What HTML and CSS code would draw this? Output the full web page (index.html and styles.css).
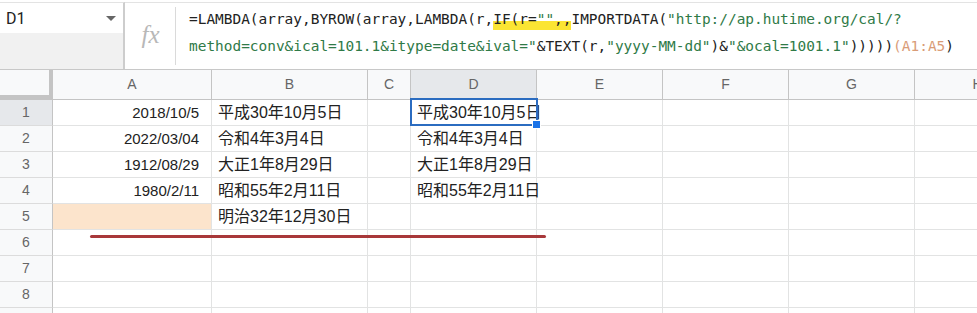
FILE: index.html
```html
<!DOCTYPE html>
<html lang="ja">
<head>
    <meta charset="UTF-8">
    <meta name="viewport" content="width=device-width, initial-scale=1.0">
    <title>LAMBDA / IMPORTDATA 和暦変換</title>
    <link rel="stylesheet" href="styles.css">
</head>
<body>
    <div class="formula-bar">
        <div class="name-box">
            <div class="name-field">
                <span class="cell-ref">D1</span>
                <span class="caret"></span>
            </div>
        </div>
        <div class="fx-cell">
            <span class="fx">fx</span>
        </div>
        <div class="formula">
            <div class="formula-line">=LAMBDA(array,BYROW(array,LAMBDA(r,<span class="hl">IF(r=<span class="str">""</span>,,</span>IMPORTDATA(<span class="str">"http://ap.hutime.org/cal/?</span></div>
            <div class="formula-line"><span class="str">method=conv&amp;ical=101.1&amp;itype=date&amp;ival="</span>&amp;TEXT(r,<span class="str">"yyyy-MM-dd"</span>)&amp;<span class="str">"&amp;ocal=1001.1"</span>)))))<span class="ref">(A1:A5</span>)</div>
        </div>
    </div>

    <div class="sheet">
        <div class="row head-row">
            <div class="corner"></div>
            <div class="col-head">A</div>
            <div class="col-head">B</div>
            <div class="col-head">C</div>
            <div class="col-head active">D</div>
            <div class="col-head">E</div>
            <div class="col-head">F</div>
            <div class="col-head">G</div>
            <div class="col-head">H</div>
        </div>

        <div class="row">
            <div class="row-head active">1</div>
            <div class="cell num">2018/10/5</div>
            <div class="cell jp">平成30年10月5日</div>
            <div class="cell"></div>
            <div class="cell jp selected">平成30年10月5日<span class="selection"><span class="handle"></span></span></div>
            <div class="cell"></div>
            <div class="cell"></div>
            <div class="cell"></div>
            <div class="cell"></div>
        </div>
        <div class="row">
            <div class="row-head">2</div>
            <div class="cell num">2022/03/04</div>
            <div class="cell jp">令和4年3月4日</div>
            <div class="cell"></div>
            <div class="cell jp">令和4年3月4日</div>
            <div class="cell"></div>
            <div class="cell"></div>
            <div class="cell"></div>
            <div class="cell"></div>
        </div>
        <div class="row">
            <div class="row-head">3</div>
            <div class="cell num">1912/08/29</div>
            <div class="cell jp">大正1年8月29日</div>
            <div class="cell"></div>
            <div class="cell jp">大正1年8月29日</div>
            <div class="cell"></div>
            <div class="cell"></div>
            <div class="cell"></div>
            <div class="cell"></div>
        </div>
        <div class="row">
            <div class="row-head">4</div>
            <div class="cell num">1980/2/11</div>
            <div class="cell jp">昭和55年2月11日</div>
            <div class="cell"></div>
            <div class="cell jp">昭和55年2月11日</div>
            <div class="cell"></div>
            <div class="cell"></div>
            <div class="cell"></div>
            <div class="cell"></div>
        </div>
        <div class="row">
            <div class="row-head">5</div>
            <div class="cell num empty-input"></div>
            <div class="cell jp">明治32年12月30日</div>
            <div class="cell"></div>
            <div class="cell"></div>
            <div class="cell"></div>
            <div class="cell"></div>
            <div class="cell"></div>
            <div class="cell"></div>
        </div>
        <div class="row">
            <div class="row-head">6</div>
            <div class="cell"></div>
            <div class="cell"></div>
            <div class="cell"></div>
            <div class="cell"></div>
            <div class="cell"></div>
            <div class="cell"></div>
            <div class="cell"></div>
            <div class="cell"></div>
        </div>
        <div class="row">
            <div class="row-head">7</div>
            <div class="cell"></div>
            <div class="cell"></div>
            <div class="cell"></div>
            <div class="cell"></div>
            <div class="cell"></div>
            <div class="cell"></div>
            <div class="cell"></div>
            <div class="cell"></div>
        </div>
        <div class="row">
            <div class="row-head">8</div>
            <div class="cell"></div>
            <div class="cell"></div>
            <div class="cell"></div>
            <div class="cell"></div>
            <div class="cell"></div>
            <div class="cell"></div>
            <div class="cell"></div>
            <div class="cell"></div>
        </div>
        <div class="row last-row">
            <div class="row-head"></div>
            <div class="cell"></div>
            <div class="cell"></div>
            <div class="cell"></div>
            <div class="cell"></div>
            <div class="cell"></div>
            <div class="cell"></div>
            <div class="cell"></div>
            <div class="cell"></div>
        </div>
    </div>

    <!-- hand-drawn underline annotation -->
    <div class="red-mark"></div>
</body>
</html>
```

FILE: styles.css
```css
body {
    margin: 0;
    width: 977px;
    height: 313px;
    overflow: hidden;
    position: relative;
    background-color: #fff;
    font-family: 'Liberation Sans', Arial, 'Noto Sans CJK JP', sans-serif;
    color: #222;
}

/* formula bar */

.formula-bar {
    display: flex;
    height: 70px;
    box-sizing: border-box;
    padding-top: 2px;
    border-bottom: 1px solid #c8c8c8;
}

.name-box {
    width: 123px;
    flex-shrink: 0;
    background-color: #f1f1f1;
    border-top: 1px solid #e3e3e3;
    border-right: 2px solid #cdcdcd;
}

.name-field {
    display: flex;
    align-items: center;
    justify-content: space-between;
    height: 30px;
    padding: 0 7px 0 6px;
    background-color: #fff;
}

.cell-ref {
    font-family: Roboto, 'Liberation Sans', sans-serif;
    font-size: 16px;
    color: #222;
}

.caret {
    width: 0;
    height: 0;
    border-left: 5px solid transparent;
    border-right: 5px solid transparent;
    border-top: 5px solid #666;
}

.fx-cell {
    width: 51px;
    flex-shrink: 0;
    display: flex;
    align-items: center;
    justify-content: center;
    border-top: 1px solid #e3e3e3;
    position: relative;
}

.fx-cell::after {
    content: "";
    position: absolute;
    right: 0;
    top: 4px;
    bottom: 4px;
    border-right: 1px solid #dadada;
}

.fx {
    font-family: 'Liberation Serif', serif;
    font-style: italic;
    font-size: 25px;
    color: #b8b8b8;
    margin-top: -2px;
}

.formula {
    flex: 1;
    border-top: 1px solid #e3e3e3;
    padding: 3px 0 0 13px;
    font-family: 'DejaVu Sans Mono', 'Liberation Mono', monospace;
    font-size: 14.45px;
    line-height: 27px;
    color: #222;
    overflow: hidden;
}

.formula-line {
    white-space: pre;
}

.formula .str {
    color: #2f7a47;
}

.formula .ref {
    color: #d99c78;
}

.formula .hl {
    padding-bottom: 3px;
    background: linear-gradient(to bottom, transparent 54%, #fbe533 54%);
}

/* grid */

.sheet {
    width: 977px;
    height: 243px;
    overflow: hidden;
}

.row {
    display: grid;
    grid-template-columns: 53px 159px 156px 43px 126px 126px 126px 126px 126px;
    height: 26px;
    box-sizing: border-box;
}

.head-row {
    height: 30px;
}

.corner {
    background-color: #f8f9fa;
    border-right: 4px solid #c4c4c4;
    border-bottom: 5px solid #c4c4c4;
}

.col-head {
    background-color: #f8f9fa;
    border-right: 1px solid #c4c4c4;
    border-bottom: 1px solid #c4c4c4;
    text-align: center;
    font-size: 14px;
    line-height: 29px;
    color: #666;
}

.col-head.active,
.row-head.active {
    background-color: #e6e8eb;
}

.row-head {
    background-color: #f8f9fa;
    border-right: 1px solid #c4c4c4;
    border-bottom: 1px solid #dcdcdc;
    text-align: center;
    font-size: 14px;
    line-height: 25px;
    color: #666;
}

.cell {
    position: relative;
    border-right: 1px solid #e2e3e3;
    border-bottom: 1px solid #e2e3e3;
    font-size: 15px;
    line-height: 25px;
    white-space: nowrap;
}

.cell.num {
    text-align: right;
    padding-right: 12px;
}

.cell.jp {
    font-size: 16px;
    padding-left: 6px;
}

.cell.empty-input {
    background-color: #fce4cc;
}

.selection {
    position: absolute;
    left: -1px;
    top: -2px;
    right: -2px;
    bottom: -1px;
    border: 2px solid #2b6cc0;
    z-index: 2;
}

.handle {
    position: absolute;
    right: -5px;
    bottom: -5px;
    width: 7px;
    height: 7px;
    background-color: #1a73e8;
    border: 1px solid #fff;
}

.red-mark {
    position: absolute;
    left: 90px;
    top: 235px;
    width: 456px;
    height: 3px;
    border-radius: 2px;
    background-color: #a8383a;
}
```
